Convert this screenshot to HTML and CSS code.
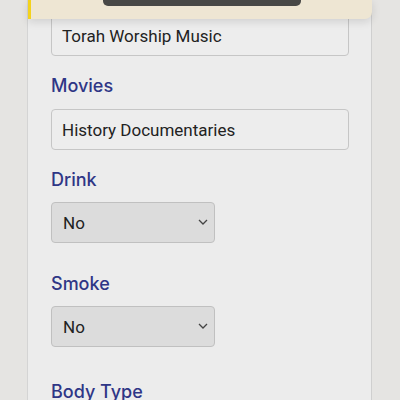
FILE: index.html
```html
<!DOCTYPE html>
<html lang="en">
<head>
  <meta charset="UTF-8" />
  <meta name="viewport" content="width=device-width, initial-scale=1.0" />
  <title>Edit Profile</title>
  <link rel="stylesheet" href="styles.css">
</head>
<body>
  <div class="toast">
    <div class="toast-bar"></div>
  </div>

  <div class="card">
    <div class="field">
      <input type="text" class="text-input" value="Torah Worship Music" />
    </div>

    <div class="field">
      <label class="field-label">Movies</label>
      <input type="text" class="text-input" value="History Documentaries" />
    </div>

    <div class="field field-select">
      <label class="field-label">Drink</label>
      <div class="select-wrap">
        <select class="select-input">
          <option>No</option>
          <option>Yes</option>
          <option>Socially</option>
        </select>
        <svg class="chevron" width="10" height="6" viewBox="0 0 10 6"><path d="M1 1l4 4 4-4" fill="none" stroke="#444" stroke-width="1.3"/></svg>
      </div>
    </div>

    <div class="field field-select field-last">
      <label class="field-label">Smoke</label>
      <div class="select-wrap">
        <select class="select-input">
          <option>No</option>
          <option>Yes</option>
          <option>Occasionally</option>
        </select>
        <svg class="chevron" width="10" height="6" viewBox="0 0 10 6"><path d="M1 1l4 4 4-4" fill="none" stroke="#444" stroke-width="1.3"/></svg>
      </div>
    </div>

    <div class="field">
      <label class="field-label">Body Type</label>
    </div>
  </div>
</body>
</html>
```

FILE: styles.css
```css
body {
  font-family: Roboto, "Liberation Sans", sans-serif;
  background-color: #e5e4e2;
  margin: 0;
  padding: 0;
  height: 400px;
  overflow: hidden;
}

.toast {
  position: absolute;
  top: 0;
  left: 28px;
  width: 341px;
  height: 19px;
  background-color: #eee6d3;
  border-left: 3px solid #f3d21c;
  border-radius: 0 0 7px 0;
  box-shadow: 0 3px 8px rgba(0, 0, 0, 0.12);
}

.toast-bar {
  position: absolute;
  top: 0;
  left: 72px;
  width: 198px;
  height: 6px;
  background-color: #484846;
  border-radius: 0 0 5px 5px;
}

.card {
  margin: 0 0 0 27px;
  width: 345px;
  min-height: 400px;
  background-color: #ececec;
  border-left: 1px solid #d4d4d4;
  border-right: 1px solid #cfcfcf;
  padding: 15px 22px 0 23px;
  box-sizing: border-box;
}

.field {
  margin-bottom: 17px;
}

.field-select {
  margin-bottom: 28px;
}

.field-last {
  margin-bottom: 32px;
}

.field-label {
  display: block;
  font-family: Inter, "Open Sans", sans-serif;
  font-size: 18px;
  font-weight: 500;
  color: #2f3686;
  line-height: 26px;
  margin-bottom: 10px;
}

.field-select .field-label {
  margin-bottom: 9px;
}

.text-input {
  display: block;
  width: 100%;
  height: 41px;
  box-sizing: border-box;
  padding: 0 10px;
  font-family: Roboto, sans-serif;
  font-size: 17px;
  color: #222;
  background-color: #ededed;
  border: 1px solid #c6c6c6;
  border-radius: 4px;
}

.select-wrap {
  position: relative;
  width: 164px;
}

.select-input {
  display: block;
  width: 100%;
  height: 41px;
  box-sizing: border-box;
  padding: 0 11px;
  font-family: Roboto, sans-serif;
  font-size: 17px;
  color: #222;
  background-color: #dcdcdc;
  border: 1px solid #c0c0c0;
  border-radius: 4px;
  appearance: none;
}

.chevron {
  position: absolute;
  right: 7px;
  top: 17px;
  pointer-events: none;
}
```
